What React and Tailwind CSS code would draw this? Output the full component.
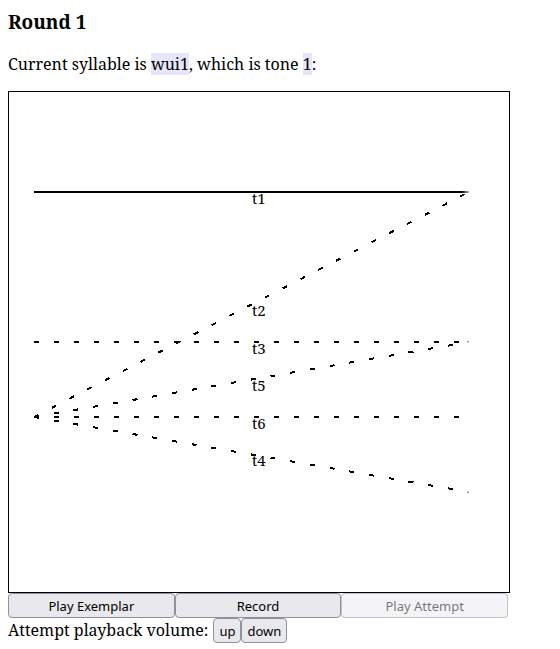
const START = 25;
const END = 460;

const tones = [
  { name: "t1", from: 100, to: 100, label: 112 },
  { name: "t2", from: 325, to: 100, label: 224 },
  { name: "t3", from: 250, to: 250, label: 262 },
  { name: "t5", from: 325, to: 250, label: 299 },
  { name: "t6", from: 325, to: 325, label: 337 },
  { name: "t4", from: 325, to: 400, label: 374 },
];

const buttonStyle =
  "h-[25px] rounded-[4px] border border-[#8f8f9d] bg-[#e9e9ed] font-['Noto_Sans',sans-serif] text-[13px] leading-[18px] text-black disabled:border-[#8f8f9d]/50 disabled:bg-[#e9e9ed]/50 disabled:text-black/55";

function ToneChart({ active }) {
  return (
    <svg
      viewBox="0 0 500 500"
      role="img"
      aria-label="Tone contours"
      className="block w-full"
    >
      <defs>
        {/* Contours fade out over their last few units */}
        <linearGradient
          id="tip"
          gradientUnits="userSpaceOnUse"
          x1="453"
          y1="0"
          x2="460"
          y2="0"
        >
          <stop offset="0" stopColor="black" />
          <stop offset="1" stopColor="black" stopOpacity="0.3" />
        </linearGradient>
      </defs>
      {tones.map((tone) => (
        <g key={tone.name}>
          <line
            x1={START}
            y1={tone.from}
            x2={END}
            y2={tone.to}
            stroke="url(#tip)"
            strokeWidth="2"
            shapeRendering="crispEdges"
            strokeDasharray={tone.name === active ? undefined : "5 15"}
          />
          <text
            x="243"
            y={tone.label}
            className="font-['Noto_Serif',serif] text-[15px]"
          >
            {tone.name}
          </text>
        </g>
      ))}
    </svg>
  );
}

export default function App() {
  return (
    <main className="bg-white px-2 pt-2 font-['Noto_Serif',serif] text-base leading-[22px] text-black">
      <h3 className="text-[19px] leading-[28px] font-bold">Round 1</h3>
      <p className="mt-[17px]">
        Current syllable is <span className="bg-[#e6e6fa]">wui1</span>, which is
        tone <span className="bg-[#e6e6fa]">1</span>:
      </p>
      <div className="mt-4 w-full max-w-[502px] border border-black">
        <ToneChart active="t1" />
      </div>
      <div className="grid w-full max-w-[500px] grid-cols-3">
        <button type="button" className={buttonStyle}>
          Play Exemplar
        </button>
        <button type="button" className={buttonStyle}>
          Record
        </button>
        <button type="button" disabled className={buttonStyle}>
          Play Attempt
        </button>
      </div>
      <div className="flex items-baseline">
        <span className="mr-[5px]">Attempt playback volume:</span>
        <button type="button" className={`${buttonStyle} px-[5px]`}>
          up
        </button>
        <button type="button" className={`${buttonStyle} px-[5px]`}>
          down
        </button>
      </div>
    </main>
  );
}
